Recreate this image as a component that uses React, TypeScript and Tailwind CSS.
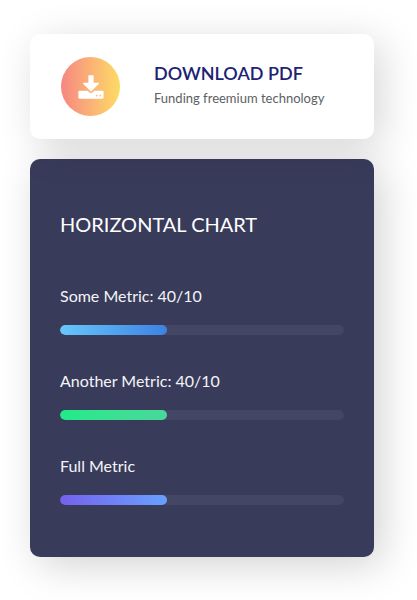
type Metric = { id: string; label: string; percent: number; fill: string };

const metrics: Metric[] = [
  { id: "some", label: "Some Metric: 40/10", percent: 37.5, fill: "from-[#67c7fb] to-[#3f82e2]" },
  { id: "another", label: "Another Metric: 40/10", percent: 37.5, fill: "from-[#20eb87] to-[#49d79c]" },
  { id: "full", label: "Full Metric", percent: 37.5, fill: "from-[#7460ee] to-[#67a0ff]" },
];

function DownloadIcon() {
  return (
    <svg viewBox="0 0 26 24" className="h-6 w-[26px]" fill="white" aria-hidden="true">
      <path d="M10.4 0.3h5.2v7.5h4.6c.8 0 1 .6.5 1.1l-7 7c-.4.4-1 .4-1.4 0l-7-7c-.5-.5-.3-1.1.5-1.1h4.6z" />
      <path
        fillRule="evenodd"
        d="M1.6 15.8h8l1.6 1.5c1 1 2.6 1 3.6 0l1.6-1.5h8c.7 0 1.2.5 1.2 1.2v5.6c0 .7-.5 1.2-1.2 1.2H1.6c-.7 0-1.2-.5-1.2-1.2V17c0-.7.5-1.2 1.2-1.2zM18.7 19.7a.9.9 0 1 0 0 1.8.9.9 0 0 0 0-1.8zM22.4 19.7a.9.9 0 1 0 0 1.8.9.9 0 0 0 0-1.8z"
      />
    </svg>
  );
}

function DownloadCard() {
  return (
    <button
      type="button"
      className="relative z-10 flex w-full items-center gap-[34px] rounded-[10px] bg-white px-[31px] py-[23px] text-left shadow-[8px_8px_40px_rgba(0,0,0,0.16)]"
    >
      <span className="flex size-[59px] shrink-0 items-center justify-center rounded-full bg-linear-to-r from-[#f58680] to-[#fddb63]">
        <DownloadIcon />
      </span>
      <span className="flex flex-col pb-[6px]">
        <span className="text-lg leading-7 font-semibold text-[#1d2275]">DOWNLOAD PDF</span>
        <span className="text-[13px] leading-[22px] text-[#5c6164]">Funding freemium technology</span>
      </span>
    </button>
  );
}

function MetricBar({ metric }: { metric: Metric }) {
  return (
    <div>
      <p id={metric.id} className="text-base leading-6 text-[#f4f4f7]">
        {metric.label}
      </p>
      <div
        role="progressbar"
        aria-labelledby={metric.id}
        aria-valuenow={metric.percent}
        aria-valuemin={0}
        aria-valuemax={100}
        className="mt-[17px] h-[10px] overflow-hidden rounded-full bg-[#444665]"
      >
        <div
          className={`h-full rounded-full bg-linear-to-r ${metric.fill}`}
          style={{ width: `${metric.percent}%` }}
        />
      </div>
    </div>
  );
}

export default function App() {
  return (
    <main className="flex min-h-screen flex-col gap-5 bg-white pt-[34px] pr-[43px] pb-[43px] pl-[30px] font-['Lato',sans-serif]">
      <DownloadCard />
      <section className="rounded-[10px] bg-[#383b5a] px-[30px] pt-[51px] pb-[52px] shadow-[8px_8px_40px_rgba(0,0,0,0.18)]">
        <h2 className="text-xl leading-7 text-white">HORIZONTAL CHART</h2>
        <div className="mt-[46px] flex flex-col gap-[34px]">
          {metrics.map((metric) => (
            <MetricBar key={metric.id} metric={metric} />
          ))}
        </div>
      </section>
    </main>
  );
}
